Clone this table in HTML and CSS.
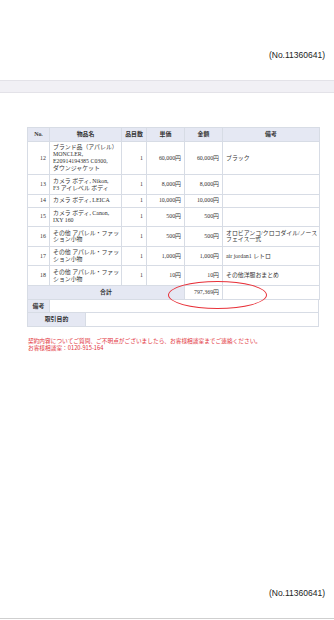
FILE: index.html
```html
<!DOCTYPE html>
<html lang="ja">
<head>
<meta charset="utf-8">
<link rel="stylesheet" href="styles.css">
</head>
<body>
<div class="page">
  <div class="top"><span class="docno">(No.11360641)</span></div>
  <div class="band"></div>
  <div class="content">
    <div class="table-wrap">
      <table class="items">
        <colgroup>
          <col class="c-no"><col class="c-name"><col class="c-qty"><col class="c-price"><col class="c-amount"><col class="c-note">
        </colgroup>
        <thead>
          <tr><th>No.</th><th>物品名</th><th>品目数</th><th>単価</th><th>金額</th><th>備考</th></tr>
        </thead>
        <tbody>
          <tr><td class="num">12</td><td>ブランド品（アパレル）<br>MONCLER,<br>E20914194385 C0300,<br>ダウンジャケット</td><td class="num">1</td><td class="num">60,000円</td><td class="num">60,000円</td><td>ブラック</td></tr>
          <tr><td class="num">13</td><td>カメラ ボディ, Nikon,<br>F3 アイレベル ボディ</td><td class="num">1</td><td class="num">8,000円</td><td class="num">8,000円</td><td></td></tr>
          <tr><td class="num">14</td><td>カメラ ボディ, LEICA</td><td class="num">1</td><td class="num">10,000円</td><td class="num">10,000円</td><td></td></tr>
          <tr><td class="num">15</td><td>カメラ ボディ, Canon,<br>IXY 160</td><td class="num">1</td><td class="num">500円</td><td class="num">500円</td><td></td></tr>
          <tr><td class="num">16</td><td>その他 アパレル・ファッ<br>ション小物</td><td class="num">1</td><td class="num">500円</td><td class="num">500円</td><td>オロビアンコ/クロコダイル/ノース<br>フェイス一式</td></tr>
          <tr><td class="num">17</td><td>その他 アパレル・ファッ<br>ション小物</td><td class="num">1</td><td class="num">1,000円</td><td class="num">1,000円</td><td>air jordan1 レトロ</td></tr>
          <tr><td class="num">18</td><td>その他 アパレル・ファッ<br>ション小物</td><td class="num">1</td><td class="num">10円</td><td class="num">10円</td><td>その他洋服おまとめ</td></tr>
          <tr class="total"><th colspan="4">合計</th><td class="num">797,369円</td><td></td></tr>
        </tbody>
      </table>
      <table class="extra">
        <tr><th class="l-note">備考</th><td></td></tr>
      </table>
      <table class="extra">
        <tr><th class="l-purpose">取引目的</th><td></td></tr>
      </table>
      <div class="circle"></div>
    </div>
    <p class="notice">契約内容についてご質問、ご不明点がございましたら、お客様相談室までご連絡ください。<br>お客様相談室：0120-915-164</p>
  </div>
  <div class="bottom"><span class="docno">(No.11360641)</span></div>
</div>
</body>
</html>
```

FILE: styles.css
```css
* { box-sizing: border-box; }
html, body { margin: 0; padding: 0; background: #fff; }
.page {
  width: 334px;
  height: 620px;
  display: flex;
  flex-direction: column;
  font-family: "Liberation Sans", "Noto Sans CJK JP", sans-serif;
  color: #222;
}
.top {
  height: 80px;
  padding: 44px 9px 0 0;
  text-align: right;
}
.docno {
  font-size: 8.5px;
  line-height: 11px;
  color: #222;
}
.band {
  height: 13px;
  background: #f1f0f5;
  border-top: 1px solid #e3e2e8;
  border-bottom: 1px solid #e3e2e8;
}
.content {
  padding: 34px 15px 0 27px;
}
.table-wrap {
  position: relative;
  width: 292px;
}
table {
  border-collapse: collapse;
  width: 292px;
  table-layout: fixed;
  font-family: "Liberation Serif", "Noto Sans CJK JP", serif;
  font-size: 5.9px;
  line-height: 6.9px;
  color: #333;
}
.items th, .items td, .extra th, .extra td {
  border: 1px solid #d7dce5;
  padding: 2.4px 3px;
  vertical-align: middle;
  text-align: left;
  white-space: nowrap;
  overflow: hidden;
}
.items th, .extra th {
  background: #e5e8f3;
  font-weight: bold;
  text-align: center;
  padding: 3px 3px;
}
.items td.num { text-align: right; }
.c-no { width: 22px; }
.c-name { width: 72px; }
.c-qty { width: 25px; }
.c-price { width: 38px; }
.c-amount { width: 38px; }
.c-note { width: 97px; }
.extra th, .extra td { border-top: 0; height: 13px; padding-top: 2px; padding-bottom: 2px; }
.extra td { background: #fff; }
.l-note { width: 22px; }
.l-purpose { width: 58px; }
.circle {
  position: absolute;
  left: 141px;
  top: 154px;
  width: 99px;
  height: 28px;
  border: 1.5px solid #e8323a;
  border-radius: 50%;
}
.notice {
  margin: 10px 0 0 1px;
  font-family: "Noto Sans CJK JP", sans-serif;
  font-size: 5.7px;
  line-height: 7.5px;
  color: #e2323a;
}
.bottom {
  margin-top: auto;
  height: 37px;
  padding: 0 9px 0 0;
  text-align: right;
  border-bottom: 1px solid #cfcfcf;
  margin-bottom: 1px;
}
```
